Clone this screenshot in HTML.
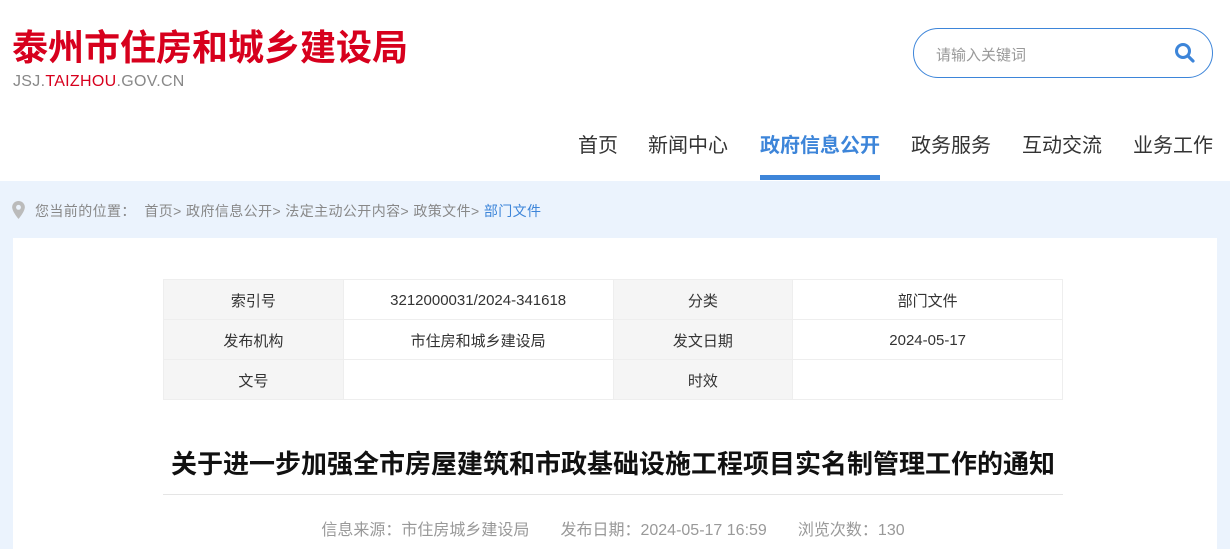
<!DOCTYPE html>
<html><head><meta charset="utf-8"><style>
*{margin:0;padding:0;box-sizing:border-box}
body{width:1230px;height:549px;overflow:hidden;background:#fff;font-family:"Liberation Sans","Noto Sans CJK SC",sans-serif;position:relative}
.a{position:absolute;white-space:nowrap}
.logo{left:12px;top:26px;font-size:36px;font-weight:bold;color:#d7001d;line-height:44px}
.dom{left:13px;top:73px;font-size:16px;color:#888;letter-spacing:0.3px}
.dom b{color:#d7001d;font-weight:normal}
.search{left:913px;top:28px;width:300px;height:50px;border:1px solid #3d85d9;border-radius:25px}
.search span{position:absolute;left:22px;top:15px;font-size:15px;color:#999}
.nav{top:133px;font-size:20px;color:#333;line-height:26px}
.bg{left:0;top:181px;width:1230px;height:368px;background:#ebf3fd}
.crumb{left:35px;top:201px;font-size:14px;color:#888;letter-spacing:0.4px}
.crumb i{font-style:normal;color:#3d85d9}
.box{left:13px;top:238px;width:1204px;height:311px;background:#fff}
table{position:absolute;left:163px;top:279px;width:900px;border-collapse:collapse;font-size:15px;color:#333}
td{height:40px;border:1px solid #eee;text-align:center;padding-top:2px}
td.l{background:#f5f5f5;width:180px}
td.v{width:270px}
.title{left:0;width:1226px;text-align:center;top:444px;font-size:26px;font-weight:bold;color:#111}
.hr{left:163px;top:494px;width:900px;height:1px;background:#e5e5e5}
.meta{left:0;width:1226px;text-align:center;top:516px;font-size:16px;color:#999}
</style></head><body>
<div class="a logo">泰州市住房和城乡建设局</div>
<div class="a dom">JSJ.<b>TAIZHOU</b>.GOV.CN</div>
<div class="a search"><span>请输入关键词</span>
<svg style="position:absolute;left:260px;top:13px" width="22" height="22" viewBox="0 0 22 22"><circle cx="9" cy="9" r="6.5" fill="none" stroke="#3d85d9" stroke-width="3"/><line x1="14" y1="14" x2="19" y2="19" stroke="#3d85d9" stroke-width="3.2" stroke-linecap="round"/></svg></div>
<div class="a nav" style="left:578px">首页</div>
<div class="a nav" style="left:648px">新闻中心</div>
<div class="a nav" style="left:760px;color:#3d85d9;font-weight:bold">政府信息公开</div>
<div class="a" style="left:760px;top:175px;width:120px;height:5px;background:#3d85d9"></div>
<div class="a nav" style="left:911px">政务服务</div>
<div class="a nav" style="left:1022px">互动交流</div>
<div class="a nav" style="left:1133px">业务工作</div>
<div class="a bg"></div>
<svg class="a" style="left:12px;top:201px" width="13" height="18" viewBox="0 0 12 17"><path d="M6 0C2.7 0 0 2.6 0 5.8 0 10 6 17 6 17s6-7 6-11.2C12 2.6 9.3 0 6 0z" fill="#bbb"/><circle cx="6" cy="6" r="2.3" fill="#ebf3fd"/></svg>
<div class="a crumb">您当前的位置：&nbsp; 首页&gt; 政府信息公开&gt; 法定主动公开内容&gt; 政策文件&gt; <i>部门文件</i></div>
<div class="a box"></div>
<table>
<tr><td class="l">索引号</td><td class="v">3212000031/2024-341618</td><td class="l">分类</td><td class="v">部门文件</td></tr>
<tr><td class="l">发布机构</td><td class="v">市住房和城乡建设局</td><td class="l">发文日期</td><td class="v">2024-05-17</td></tr>
<tr><td class="l">文号</td><td class="v"></td><td class="l">时效</td><td class="v"></td></tr>
</table>
<div class="a title">关于进一步加强全市房屋建筑和市政基础设施工程项目实名制管理工作的通知</div>
<div class="a hr"></div>
<div class="a meta">信息来源：市住房城乡建设局&nbsp;&nbsp;&nbsp;&nbsp;&nbsp;&nbsp;&nbsp;发布日期：2024-05-17 16:59&nbsp;&nbsp;&nbsp;&nbsp;&nbsp;&nbsp;&nbsp;浏览次数：130</div>
</body></html>
